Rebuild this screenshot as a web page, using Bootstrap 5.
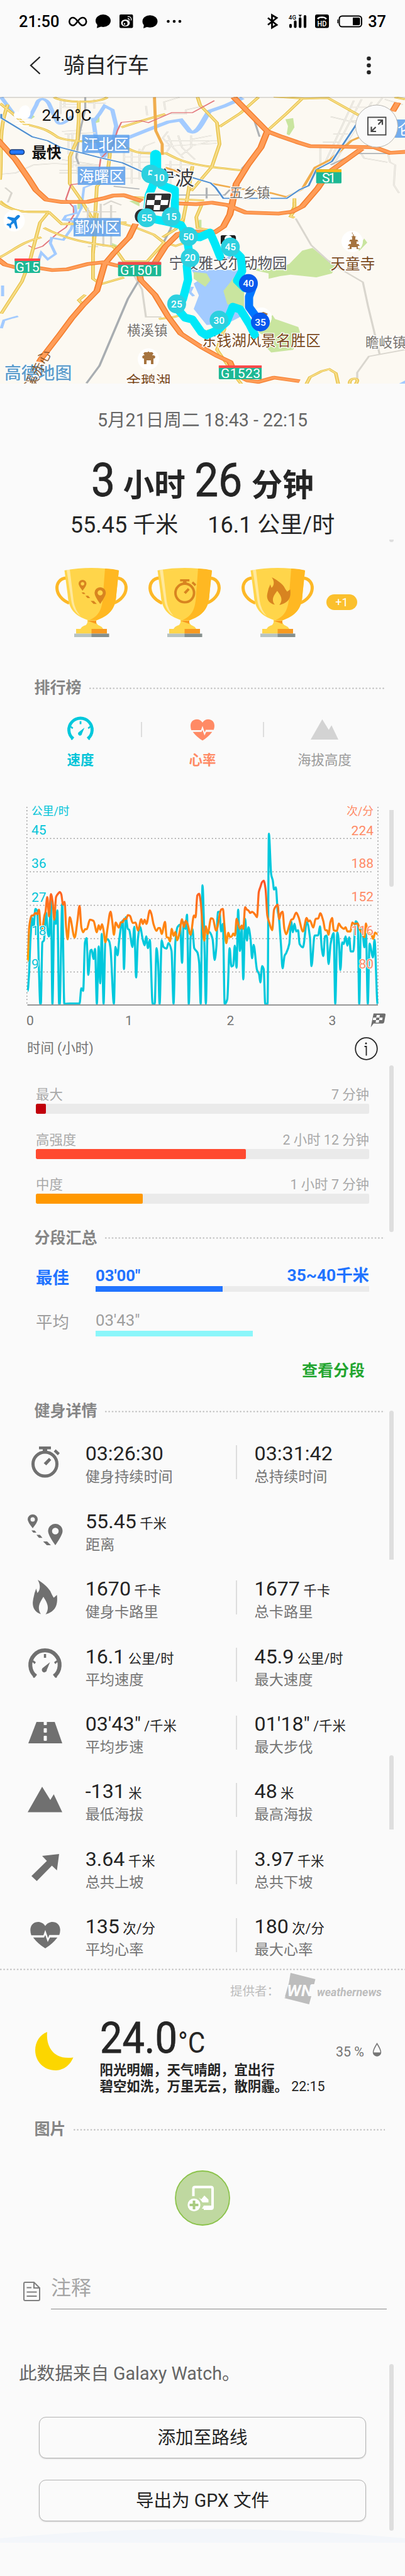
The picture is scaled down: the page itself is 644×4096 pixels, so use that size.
<!DOCTYPE html>
<html lang="zh-CN">
<head>
  <meta charset="UTF-8">
  <title>骑自行车</title>
  <meta name="viewport" content="width=device-width, initial-scale=1">
  <!-- Bootstrap CSS -->
  <link href="https://cdn.jsdelivr.net/npm/bootstrap@5.3.0/dist/css/bootstrap.min.css" rel="stylesheet">
  <style>
    body { background: #fafafa; color: #252525; font-family: Roboto, "Noto Sans CJK SC", sans-serif; }
    svg { display: block; flex: none; overflow: visible; }
    svg text { font-family: Roboto, "Noto Sans CJK SC", sans-serif; }
    .screen { width: 644px; height: 4096px; overflow: hidden; }

    .status-bar { height: 68px; padding: 0 30px; font-size: 25.4px; font-weight: 500; line-height: 68px; color: #000; }
    .app-bar { height: 86px; padding: 0 54px 14px 47px; }
    .app-title { font-size: 34px; line-height: 40px; margin: 0 0 0 36px; font-weight: 400; }
    .map-box { height: 456px; overflow: hidden; background: #fcf9f2; }

    .date-line { margin-top: 38px; font-size: 28.6px; line-height: 40px; color: #666; }
    .duration { margin-top: 30px; font-size: 75px; line-height: 90px; }
    .duration span { display: inline-block; line-height: 1; }
    .duration .num { transform: scaleX(.9); margin: 0 -2px; -webkit-text-stroke: .8px #252525; }
    .duration .unit { font-size: 49.5px; font-weight: 700; }
    .distance { margin-top: 5px; gap: 47px; font-size: 36px; line-height: 44px; }
    .trophies { margin-top: 46px; padding-left: 89px; height: 110px; gap: 34px; }
    .more-pill { margin: 0 0 2px -14px; width: 49px; height: 25px; border-radius: 13px; background: #fbc02d; color: #fff; font-size: 18px; line-height: 26px; }

    .section-head { height: 30px; padding: 0 32px 0 54.5px; gap: 12px; font-size: 25px; line-height: 30px; font-weight: 700; color: #868686; }
    .dots { height: 3px; background: radial-gradient(circle at 1.3px 1.5px, #bbb 0 .8px, transparent 1.5px) 0 0 / 5.37px 3px repeat-x; }
    .tabs-row { margin-top: 34px; padding: 0 31px; font-size: 21.4px; line-height: 24px; }
    .tab-item { width: 194px; gap: 19px; }
    .tab-line { height: 24px; width: 1.5px; margin: 5px -.75px 0; background: #ddd; }

    .time-row { margin-top: 7px; height: 40px; padding: 0 43px; font-size: 21.4px; color: #757575; }
    .zone { width: 530px; margin: 0 57px 27.6px; font-size: 21.4px; line-height: 28px; color: #a9a9a9; }
    .zone .progress { height: 16px; border-radius: 2px; background: #eaeaea; }
    .zone .progress-bar { border-radius: 2px; }
    .z-max { background: #c1000b; }
    .z-high { background: #ff4a30; }
    .z-mid { background: #ff9800; }

    .split { margin: 0 57px; line-height: 33px; font-size: 26.4px; }
    .split-name { width: 95px; padding-top: 4px; }
    .split-time { font-size: 25.7px; }
    .split .progress { height: 9px; border-radius: 0; background: #ebebeb; }
    .best { color: #2173ff; font-weight: 700; }
    .average { color: #9e9e9e; }
    .more-link { display: block; margin: 40px 64px 0 0; font-size: 25px; line-height: 30px; font-weight: 700; color: #22a52f; text-decoration: none; }

    .detail-row { height: 107.35px; }
    .detail-icon { width: 136px; padding-left: 8px; }
    .detail-cell { width: 240px; height: 107.35px; padding-top: 21px; }
    .detail-cell p { margin: 0; font-size: 32.2px; line-height: 38px; white-space: nowrap; }
    .detail-cell p span { font-size: 21.4px; line-height: 1; margin-left: -2.7px; }
    .detail-cell div { margin-top: 3px; font-size: 23.2px; line-height: 30px; color: #757575; }
    .detail-line { width: 1.5px; height: 54px; margin-right: 28px; background: #ddd; }

    .provider { height: 50px; margin-top: 4px; padding-right: 36px; gap: 8px; font-size: 19.5px; color: #bdbdbd; }
    .weather { margin-top: 19px; height: 124px; }
    .temperature { font-size: 68.5px; line-height: 70px; }
    .temperature span { display: inline-block; line-height: 1; transform: scaleX(.92); transform-origin: left; -webkit-text-stroke: .8px #252525; }
    .temperature .deg { font-size: 46px; margin-left: -9px; -webkit-text-stroke: 0; }
    .forecast { margin-top: 3px; font-size: 21.4px; line-height: 25.4px; white-space: nowrap; }

    .add-photo { margin: 50px auto 0; width: 88px; height: 88px; }
    .note-row { margin: 76px 29px 0 37px; gap: 17px; }
    .note-field { height: 57px; border-bottom: 1.6px solid #8a8a8a; font-size: 32px; line-height: 46px; color: #a5a5a5; }
    .source { margin: 82px 0 0 30px; font-size: 28.6px; line-height: 40px; color: #666; }
    .wide-btn { width: 520px; height: 65.5px; padding: 0; border: 1px solid #b4b4b4; border-radius: 11px; background: #fafafa; color: #252525; font-size: 28.6px; box-shadow: 0 1px 2px rgba(0, 0, 0, .15); }

    /* Scrollbar thumbs float over the page */
    .thumb { position: absolute; left: 619px; width: 7px; background: #dedede; }
  </style>
</head>
<body>
<div class="screen position-relative">

  <div class="status-bar d-flex align-items-center">
    <span>21:50</span>
    <svg class="ms-3" width="160" height="24" viewBox="107 22 160 24">
      <path d="M121 35c-3-5-5-7-8-7a5.500 6 0 0 0 0 12.500c6 0 8-12.500 15.500-12.500a5.500 6 0 0 1 0 12.500c-3 0-5-3-7-6" fill="none" stroke="#000" stroke-width="2.600"/>
      <ellipse cx="161" cy="33" rx="12" ry="10"/><path d="M152 38l-1 6.700 8-3z"/>
      <rect x="187" y="23" width="21.500" height="21.500" rx="2"/>
      <ellipse cx="196.500" cy="36.500" rx="7" ry="5.500" fill="#fff"/><circle cx="196" cy="37" r="3.800"/><circle cx="195" cy="38" r="1.200" fill="#fff"/>
      <path d="M200 26.500c4-1 6.500 2 5.500 6M200 29.500c2 0 3 1 2.500 3" fill="none" stroke="#fff" stroke-width="1.300"/>
      <ellipse cx="235.500" cy="34" rx="12" ry="9.800"/><path d="M226 39l-1 6 8-3z"/>
      <circle cx="264.500" cy="34" r="2.300"/><circle cx="274" cy="34" r="2.300"/><circle cx="283" cy="34" r="2.300"/>
    </svg>
    <svg class="ms-auto" width="152" height="24" viewBox="427 22 152 24">
      <path d="M428 28.500l14 11-7.500 4.500V24l7.500 4.500-14 11" fill="none" stroke="#000" stroke-width="2.800"/>
      <text x="461" y="31.200" font-size="9.500" font-weight="500" textLength="12">4G</text>
      <path d="M464 40v2.500M471.500 34.500v8M479.200 29.500v13M487 26v16.500" stroke="#000" stroke-width="4.200" stroke-linecap="round"/>
      <path d="M476.500 23.500h5.500l-2.700 3.500z"/>
      <rect x="503" y="23" width="22" height="21.500" rx="3"/>
      <path d="M506 29.500c3-4.500 13-4.500 16 0l-2.500 1.500-2-2.300h-7l-2 2.300z" fill="#fff"/>
      <text x="506.500" y="42" font-size="12" font-weight="500" fill="#fff" textLength="15" lengthAdjust="spacingAndGlyphs">HD</text>
      <rect x="541.500" y="25.500" width="35.500" height="17" rx="4.500" fill="none" stroke="#000" stroke-width="2"/>
      <path d="M540 31h-1.500v6h1.500z"/><path d="M563 28h9.500q2 0 2 2v8q0 2-2 2H563z"/>
    </svg>
    <span class="ms-2">37</span>
  </div>

  <header class="app-bar d-flex align-items-center">
    <svg width="18" height="28" viewBox="0 0 18 28"><path d="M16.500 .5L2 14l14.500 13.500" fill="none" stroke="#252525" stroke-width="2.300"/></svg>
    <h1 class="app-title">骑自行车</h1>
    <svg class="ms-auto" width="7" height="30" viewBox="0 0 7 30" fill="#252525"><circle cx="3.500" cy="4" r="3.300"/><circle cx="3.500" cy="15" r="3.300"/><circle cx="3.500" cy="26" r="3.300"/></svg>
  </header>

  <!-- Route map -->
  <div class="map-box">
    <svg width="644" height="456" viewBox="0 0 644 456">
      <defs>
        <clipPath id="mapClip"><rect width="644" height="456"/></clipPath>
        <g id="minor" fill="none">
          <path d="M235 740v110M250 740v60M235 800h75M235 780h70M340 770h70M365 740v70M240 980l80-10M250 1000l120-10M240 1190l135 40M0 1300l60-10 70-60 80-10 100 10h80M290 1240h90M230 1270h70M230 1290h70M280 990v260M265 1000v150M300 1100v200M565 790l5 70M640 820l-5-60 60-35M660 850h60v-30l70-30"/>
          <path d="M640 1050h200M640 1090l200-20M650 1010l20 90 40 80M690 1010l15 90 50 90M740 1010v90l-40 60M650 980l-20 50 30 60-20 60M600 1060l-40 30-20 70M490 1130h110M480 1170h120M470 1210h110M460 1260h120M420 1330h120M480 1100v260M510 1120v250M540 1110v230M640 1230h110M640 1260h100M660 1200v220M700 1190v140M740 1040l80-30M740 1090l80-40"/>
          <path d="M1370 750l-120 500M1400 740l-130 480M1440 760l-150 470M1360 800h80M1340 900h90M1290 1000h70M1250 1060h60M1280 870l130 60M1480 730l-40 100M1490 740l70 40M1500 1130l10 80 20 20-5 150 20 60M1390 1120l20 60 90 30M1240 1100v200"/>
        </g>
        <g id="yellowNorth" fill="none">
          <path d="M210 725c30 40 170 50 205 0M305 750v140l-5 150-30 130v200l40 110 50 160M0 770c30 50 60 90 95 155 90 40 90 50 130 100 80 60 250 0 260 70 40 50 60 50 160 50 60 60 90 90 290 125M30 780c-40 200-20 400-30 560M425 1050v110l-10 150-40 80-15 500M765 725l10 60 65 130 10 160-30 170-80 180M850 945l80-100 70-120M1170 735l-60 110-75 130M1060 720l120 15 90-5 120 130M470 950l80-50 90-50M0 1500c20 40 60 80 110 80h80M500 1470l290 25M1140 1480v60l-15 60M1568 740l-40-15M745 1240l-20 240-25 250"/>
        </g>
        <g id="yellowSouth" fill="none">
          <path d="M0 110c20 40 70 70 110 70l80 3 50 90h60M185 190l-30 70-40 290-30 150-80 240M170 300c80 80 150 110 270 140l40 110h90l65-140-40-60-80-60-60-30M240 270l250-10M0 520c60-60 80-110 160-150M375 190l-15 300v190l30 40 90-50M630 370l50-60 30-80M640 410l40 25 30-20v-70M780 130l-20 90 5 80 60 20M1140 110v60l-15 45 15 10M330 800l-25 40 20 40M615 980l60-15 35-20M870 1050l-30 160 80 220 20 50M1185 1470l15-55 45-45 30-15 25 30 10 85M1355 1470c-10-60 50-60 20 0"/>
        </g>
        <g id="orangeNorth" fill="none">
          <path d="M-10 1040L60 1190 110 1330 140 1420 180 1490 240 1507 340 1505 400 1480 440 1458 480 1456 550 1500M690 1517L760 1523 820 1512 880 1530 950 1585 1080 1593 1130 1580 1170 1540 1230 1405 1270 1290 1400 1110M905 725L1035 980 1090 1020 1150 1060 1200 1090 1450 1098 1510 1140 1575 1132M1035 980L1010 1100 960 1230 915 1370 898 1530 890 1600 865 1690 830 1735 740 1725 690 1745 640 1840 600 1960M1540 765L1520 830"/>
        </g>
        <g id="orangeSouth" fill="none">
          <path d="M525 270L500 370 440 490 405 570 375 770 320 880 280 970 230 1100 190 1200 160 1275 152 1300M-10 530L20 575 60 595 150 600 200 615 260 610 340 570 400 557 450 580 535 610 545 690 600 800 650 960 700 1090 780 1190 840 1255 890 1300 910 1390 960 1440 1000 1450 1060 1418 1160 1445"/>
        </g>
      </defs>
      <g clip-path="url(#mapClip)">
        <!-- parks and water, northern half -->
        <g transform="translate(0 -153.800) scale(.4107 .213)">
          <path d="M1105 890l30-10 5 70-20 60-10-10 5-60zM115 840l20 30-15 20zM360 880l25-10v40l-20 10zM500 1500l40-10v50zM300 1490h20v70h-20z" fill="#c9e59f"/>
          <g fill="none" stroke="#a3cbff">
            <path stroke-width="17" d="M5 725l50 130 60 20 25-90c10-70 40-50 50-10l30 130c10 40 40 0 60-40M365 900l20-50 20-60 30 30 15 120-10 100-40 140-30-170-10-130z"/>
            <path stroke-width="22" d="M480 1040l90-70 80-60 50-15 35 85c30 30 50-80 75-150l60-40 70-60"/>
            <path stroke-width="10" d="M365 1370l-40 30-10 150-20 80-45 5M420 1180v-60"/>
          </g>
          <use href="#minor" stroke="#d9d6ce" stroke-width="7"/>
          <use href="#minor" stroke="#f8f5ee" stroke-width="3"/>
          <path d="M330 725v90l-20 160-15 200 10 50M985 900l20 120M935 1260l30-60M1370 1145h170M1370 1150l-90 80M440 1390l100 20M690 1455h180l20-40M800 1400v80" fill="none" stroke="#aeb2b5" stroke-width="8"/>
          <g stroke="#e3be3e" stroke-width="14"><use href="#yellowNorth"/></g>
          <g stroke="#f8dc86" stroke-width="8"><use href="#yellowNorth"/></g>
          <path d="M598 725l5 250 25 100v80M820 1370l80 30 150 40 60 30 60-60 50-160 60-60 80-140 60-50M640 1250l80 50" fill="none" stroke="#f0ad4d" stroke-width="12"/>
          <path d="M830 750l-85 90h-80l-90 75-30-15-75 12-15 60-20 120-45 90-10 130-40 30-40 30-25 5-20 110 30 60v60l-30 90-30 40-60 100-30 20-25-25" fill="none" stroke="#e2747a" stroke-width="6"/>
          <path d="M5 850v30l120 140 60 30 50 50 150 75 90 40 80 70 190 40 70 40 20 35 30 80h245l50-65 35-30 30-120 60-60 30-90 90-260" fill="none" stroke="#fff" stroke-width="13"/>
          <path d="M5 850v30l120 140 60 30 50 50 150 75 90 40 80 70 190 40 70 40 20 35 30 80h245l50-65 35-30 30-120 60-60 30-90 90-260" fill="none" stroke="#5290cf" stroke-width="8"/>
        </g>
        <!-- parks and water, southern half -->
        <g transform="translate(0 144.400) scale(.4107 .213)">
          <path d="M740 610l180 5 20 90v250l-60 60-80 10-50-120 20-100-20-90 25-30-20-30z" fill="#a3cbff"/>
          <path d="M870 530l35-40 20 50zM1568 1440l-25 25h25z" fill="#a3cbff"/>
          <path d="M750 630l50 10 15 50-20 50-45-60zM905 670l15 50 25-10v180l-65-20-15-100 25-60zM950 600l110 10 60-40 50-100 40-20 50 80 45 40-20 70-60 30-100-20-40 10-45 20v-40zM1055 950l10 30 90 60 10 60-30 110-85 20-30-60 10-60-30-30zM430 410l25 20-10 30-20-20zM1410 380l12 30-30 60-10-5zM800 1060l30-10v60h-20zM710 970l15-30v40zM770 240h10v60h-20z" fill="#c9e59f"/>
          <path d="M290 130l5 60-40 20-10 30 40 10-10 60-30 80-45-15-5 40 20 80-30 40-25-50-20 110-70-20-5 60M10 730v80M5 1050l10-60 35-20 20-10M745 740l-10 40 15 30" fill="none" stroke="#a3cbff" stroke-width="12"/>
          <g fill="none" stroke="#d9d6ce" stroke-width="8">
            <path d="M320 180h130M330 230h130M340 150v170M390 120v220M430 130v300M400 130l30-30 40 30M360 380v110M400 330v110M340 440h40M520 660l30 100 15 205h60M1145 230l60 200 80 140 120 135 20 180 45 360M1568 1210l-140 50-45 120v85M20 0l25 40-15 70"/>
          </g>
          <path d="M535 700l-40 130-110 500-50 130M600 560l30-140 30-110 25-150" fill="none" stroke="#a8adb1" stroke-width="9"/>
          <g stroke="#e3be3e" stroke-width="14"><use href="#yellowSouth"/></g>
          <g stroke="#f8dc86" stroke-width="8"><use href="#yellowSouth"/></g>
          <g stroke="#f47d2c" stroke-width="26" stroke-linejoin="round"><use href="#orangeSouth"/></g>
          <g stroke="#ff9d58" stroke-width="17" stroke-linejoin="round"><use href="#orangeSouth"/></g>
        </g>
        <g transform="translate(0 -153.800) scale(.4107 .213)" stroke-linejoin="round">
          <g stroke="#f47d2c" stroke-width="27"><use href="#orangeNorth"/></g>
          <g stroke="#ff9d58" stroke-width="18"><use href="#orangeNorth"/></g>
        </g>

        <!-- place names -->
        <g fill="#5c9fec" fill-opacity=".86"><rect x="130.600" y="60.300" width="75" height="29"/><rect x="123.600" y="111" width="75.600" height="29"/><rect x="117" y="192.800" width="75" height="29"/><rect x="628" y="36" width="16" height="29"/></g>
        <g fill="#fff" font-size="24"><text x="132.500" y="83.500">江北区</text><text x="125.500" y="134.500">海曙区</text><text x="118.500" y="216">鄞州区</text><text x="632" y="60">仑</text></g>
        <g paint-order="stroke" stroke="#fff" stroke-width="2.500" font-size="21.500" fill="#77736d">
          <text x="365" y="159.500">五乡镇</text><text x="202" y="379">横溪镇</text><text x="581" y="398">瞻岐镇</text>
          <text x="247" y="140" font-size="31" fill="#3c3c40">宁波</text>
          <text x="268.500" y="272.500" font-size="23.500" fill="#55555a">宁波雅戈尔动物园</text>
        </g>
        <circle cx="416" cy="351" r="16" fill="#fff"/><path d="M412 344l7-2 7 3-3 3v5h-8z" fill="#a67440"/>
        <g paint-order="stroke" stroke="#fff" stroke-width="2.500" font-size="23.600" fill="#7b4a1c">
          <text x="525.500" y="273.500">天童寺</text><text x="321" y="395.500">东钱湖风景名胜区</text><text x="200.500" y="460.500">金鹅湖</text>
        </g>
        <text x="7" y="448.500" font-size="26.800" font-weight="500" fill="#5b9ccb" stroke="#fff" stroke-width="2" paint-order="stroke">高德地图</text>
        <text transform="translate(53 466) rotate(-64)" font-size="22" fill="#7b4a1c" fill-opacity=".85">溪赤心</text>
        <!-- road shields -->
        <g fill="#1db894"><rect x="502.700" y="115.200" width="40.300" height="22.400" rx="1.500"/><rect x="23.400" y="257" width="40.300" height="23" rx="1.500"/><rect x="187.700" y="262.400" width="68.600" height="22.800" rx="1.500"/><rect x="347.900" y="427" width="68.200" height="22" rx="1.500"/></g>
        <path d="M502.700 115.200h40.300v4.500h-40.300z" fill="#fdb813"/>
        <path d="M23.400 257h40.300v4h-40.300zM187.700 262.400h68.600v4.500h-68.600zM347.900 427h68.200v4h-68.200z" fill="#ff4a4a"/>
        <g fill="#fff" font-size="21"><text x="512" y="135.500" textLength="22">S1</text><text x="24.500" y="277.500" textLength="38">G15</text><text x="191" y="282.500" textLength="63">G1501</text><text x="351" y="446.500" textLength="63">G1523</text></g>
        <!-- points of interest -->
        <circle cx="22.500" cy="197" r="17" fill="#fff"/>
        <path d="M31 188.500q2 1.500-1 4l-4 4 2 12-2 2-4-10-4 3v4l-2 2-2-4-4-2 2-2h4l3-4-8-5 2-2 10 2 4-4q3-1.500 4 0z" fill="#1583e0"/>
        <circle cx="560" cy="230" r="17" fill="#fff"/>
        <path d="M559 216h2v4l6 3h-2v4h3l2 3h-3v4h3l2 3h-3v4h3v1h-5v-3h-8v3h-6v-1h3v-4h-3l2-3h3v-4h-3l2-3h3v-4h-2l5-3z" fill="#a67440"/>
        <circle cx="236" cy="417" r="17" fill="#fff"/>
        <path d="M228 408l2-2h5v-1h2v1h5l2 2-2 3h3l2 2-1 3h-2v9h-4v-6h-7v6h-4v-9h-2l-1-3 2-2h2z" fill="#a67440"/>
        <circle cx="363.500" cy="229" r="16.500" fill="#fff"/><path d="M351 221q1-1 3-1h19q3 1 2 8v6h-24z" fill="#1f1f1f"/><circle cx="363" cy="226" r="6" fill="#fff"/>

        <!-- recorded route -->
        <g fill="none" stroke-linecap="round" stroke-linejoin="round">
          <path d="M247.500 94v36l-11 27-2 22M252 128l4 12 22 8v44M234 192l38 8 16 4 8 14 6 36-5 15 2 22-8 30-9 16 12 14 12 3 14 20 8 5 18-8 14-13 10-24 12 4 15 24 8 16M300 222l18 1 16-7 8 18 8 20M366 238l17 17 2 22-8 15 12 12" stroke="#00e8f8" stroke-width="13"/>
          <path d="M247.500 93v36" stroke="#00e8f8" stroke-width="17.500"/>
          <path d="M402 302l-6 16v16l16 22" stroke="#0077ff" stroke-width="13"/>
        </g>
        <circle cx="226" cy="190" r="12.500" fill="#2f2f2f" stroke="#fff" stroke-width="1.500"/>
        <g transform="translate(231 153)">
          <path d="M5 0h33q4 0 3.500 4l-4 22q-.5 4-4 4H2q-4 0-3.500-4l3-22q.5-4 3.500-4z" fill="#2f2f2f" stroke="#fff" stroke-width="1.500"/>
          <path d="M16 3.500h10l-1 7.500H15zM3 11h12l-1 8H2zM25 11h12l-1.500 8H24zM14 19h10l-1 8H13z" fill="#fff"/>
        </g>
        <g fill="#2dd0df"><circle cx="239.800" cy="122.700" r="15"/><circle cx="253" cy="128" r="15"/><circle cx="233.300" cy="192.300" r="15"/><circle cx="272.300" cy="190.600" r="15"/><circle cx="299.800" cy="222.100" r="15"/><circle cx="302.300" cy="256" r="15"/><circle cx="280.900" cy="329.300" r="15"/><circle cx="348.300" cy="355.100" r="15"/><circle cx="366.300" cy="238.800" r="15"/></g>
        <g fill="#0759ee"><circle cx="414" cy="358" r="15"/><circle cx="395" cy="296.700" r="15"/></g>
        <g fill="#fff" font-size="15.500" font-weight="500" text-anchor="middle">
          <text x="253" y="133.500">10</text><text x="233.300" y="197.500">55</text><text x="272.300" y="195.500">15</text><text x="299.800" y="227.500">50</text><text x="302.300" y="261">20</text><text x="280.900" y="334.500">25</text><text x="348.300" y="360.500">30</text><text x="366.300" y="244">45</text><text x="414" y="363.500">35</text><text x="395" y="302">40</text>
        </g>
        <path d="M242.500 117.500h-5l-.8 6q3.500-1.500 4.300 1" fill="none" stroke="#fff" stroke-width="2"/>

        <!-- weather and legend -->
        <path d="M24 34c-6-8 3-14 6-9 1-13 16-16 18-3 2 9-4 14-12 13z" fill="#fff"/>
        <path d="M24 37.500h22M24 42h22M28 46h18" stroke="#fff" stroke-width="1.500"/>
        <text x="66.500" y="37.500" font-size="26.300" textLength="79" fill="#111">24.0°C</text>
        <rect x="15.500" y="84" width="23" height="7.500" rx="3.500" fill="#2377fb" stroke="#1a3c78" stroke-width="1.500"/>
        <text x="50.500" y="96.500" font-size="23.500" font-weight="700" fill="#111">最快</text>
        <circle cx="599" cy="46.500" r="33.500" fill="#fafafa" stroke="#b5b3af"/>
        <g fill="none" stroke="#444"><rect x="585" y="32.500" width="28.500" height="28" stroke-width="1.800"/><path d="M591 54.500l6.500-6.500M601.500 44l6-6.500M600.500 37h7.500v7.500M590.500 47.500V55h7.500" stroke-width="2.200"/></g>
        <path d="M0 .8h644" stroke="#000" stroke-opacity=".14" stroke-width="1.800"/>
      </g>
    </svg>
  </div>

  <!-- Summary -->
  <div class="date-line text-center">5月21日周二 18:43 - 22:15</div>
  <div class="duration text-center"><span class="num">3</span><span class="unit">&nbsp;小时&nbsp;</span><span class="num">26</span><span class="unit">&nbsp;分钟</span></div>
  <div class="distance d-flex justify-content-center"><span>55.45 千米</span><span>16.1 公里/时</span></div>

  <div class="trophies d-flex align-items-center">
    <svg width="114" height="110" viewBox="0 0 114 110">
      <defs>
        <g id="trophy">
          <path d="M16 16C-4 18-4 46 21 56M97 16c20 2 20 30-5 40" fill="none" stroke="#fdb827" stroke-width="5"/>
          <path d="M13.500 4Q56 -4 100 4L96 42C95 66 84 76 64 83.500H52C30 76 20 66 18.500 42z" fill="#ffd54a"/>
          <path d="M78 1Q92 1.500 100 4L96 42C95 66 84 76 64 83.500H52C70 76 74 64 75 40z" fill="#ffb822"/>
          <path d="M17 3.500l5-1 6 50q2 14 11 24Q26 68 24 50z" fill="#fff" fill-opacity=".45"/>
          <path d="M50 83l14 .5q-1 5 5 9H46q5-4 4-9.500z" fill="#ffd54a"/><path d="M50 84h14v5z" fill="#f79a20"/>
          <path d="M39 97q3-7 18-7t18 7z" fill="#ffd54a"/>
          <path d="M32 97h25v7.500H32z" fill="#ffd54a"/><path d="M56.500 97H81v7.500H56.500z" fill="#f79a20"/>
          <path d="M29 104.500h28v5.500H29z" fill="#b7c3c2"/><path d="M56.500 104.500H84.500v5.500h-28z" fill="#85908e"/>
        </g>
        <g id="pins">
          <path fill-rule="evenodd" d="M8 0a8 8 0 0 1 8 8q0 4-8 14Q0 12 0 8A8 8 0 0 1 8 0zm0 4.500a3.500 3.500 0 1 0 0 7 3.500 3.500 0 0 0 0-7zM44 15a11.500 11.500 0 0 1 11.500 11.500q0 6-11.500 22.500Q32.500 33 32.500 26.500A11.500 11.500 0 0 1 44 15zm0 6.200a5.300 5.300 0 1 0 0 10.600 5.300 5.300 0 0 0 0-10.600z"/>
          <path d="M6 25.500h5l3 3.500H9zM14 32.500h5.500l4 4.700h-5.500zM24.500 43H31l6 6h-6.500z"/>
        </g>
        <g id="stopwatch">
          <circle cx="21.500" cy="28" r="19" fill="none" stroke="currentColor" stroke-width="5"/>
          <path d="M12 0h19v4.500h-6V9h-7V4.500h-6zM38.500 4.500l6.500 6-3 3.500-6.500-6zM28 18l3.500 3.500-8 8.500-4-3.500z"/>
        </g>
        <g id="flame"><path d="M8 0C18 6 24 12 28 18Q31 25 33.500 28.500L38.500 24C40 38 38 50 20.500 55 28 44 22 35 17 27 12 35 6 44 13 54.500 2 51-1 42 .5 33Q2 22 5.500 14l2 7C13 15 12 7 8 0z"/></g>
        <g id="gauge">
          <path d="M11.800 39.500A23.300 23.300 0 1 1 41.200 39.500" fill="none" stroke="currentColor" stroke-width="6.200"/>
          <path d="M24.800 4h3.500v6h-3.500zM6 16l2-2 4 3-2 3zM47 16l-2-2-4 3 2 3zM7 40l5-5 1.500 2-5 5zM46 40l-5-5-1.500 2 5 5zM34.500 17L29.500 29a4 4 0 1 1-7-2.500z"/>
        </g>
        <g id="peaks"><path d="M0 40.500L23 0l13 21L41.500 12 55 40.500z"/></g>
        <g id="heart">
          <path d="M24 7.500C30-3 48-1 48 14q0 4-1.500 8H30.500L28.500 27 24 14 21 22.500H1.500Q0 18 0 14C0-1 18-3 24 7.500zM4.500 26H22l2-4 4 11.500L31.500 26H43.500Q36 36 24 43.500 12 36 4.500 26z"/>
        </g>
      </defs>
      <use href="#trophy"/><use href="#pins" fill="#d88420" transform="translate(36 19) scale(.78)"/>
    </svg>
    <svg width="114" height="110" viewBox="0 0 114 110"><use href="#trophy"/><use href="#stopwatch" fill="#d88420" color="#d88420" transform="translate(40 18) scale(.78)"/></svg>
    <svg width="114" height="110" viewBox="0 0 114 110"><use href="#trophy"/><use href="#flame" fill="#d88420" transform="translate(39.500 15) scale(.96 .8)"/></svg>
    <span class="more-pill text-center">+1</span>
  </div>

  <div class="section-head d-flex align-items-center" style="margin-top: 66px"><span>排行榜</span><i class="dots flex-fill"></i></div>
  <div class="tabs-row d-flex align-items-start">
    <div class="tab-item d-flex flex-column align-items-center fw-bold" style="color: #00c4d8">
      <svg width="42" height="35" viewBox="0 0 53 43"><use href="#gauge" fill="#00c8dc" color="#00c8dc"/></svg>速度
    </div>
    <i class="tab-line"></i>
    <div class="tab-item d-flex flex-column align-items-center fw-bold" style="color: #ff8a65">
      <svg width="38" height="35" viewBox="0 0 48 44"><use href="#heart" fill="#ff8a65"/></svg>心率
    </div>
    <i class="tab-line"></i>
    <div class="tab-item d-flex flex-column align-items-center" style="color: #9b9b9b">
      <svg width="44" height="35" viewBox="0 0 55 42"><use href="#peaks" fill="#d3d3d3"/></svg>海拔高度
    </div>
  </div>

  <!-- Speed and heart rate chart -->
  <svg width="644" height="376" viewBox="0 0 644 376" style="margin-top: 43px">
    <defs>
      <linearGradient id="heat" gradientUnits="userSpaceOnUse" x1="0" y1="130" x2="0" y2="262"><stop stop-color="#ff4b2b"/><stop offset=".25" stop-color="#ff6a20"/><stop offset=".6" stop-color="#ff8412"/><stop offset="1" stop-color="#ffa300"/></linearGradient>
    </defs>
    <g stroke="#909090" stroke-width="1.500" stroke-dasharray="1.600 3.760" fill="none">
      <path d="M47.500 69.200h546M47.500 122.200h546M47.500 175.500h546M47.500 228.500h546M47.500 281.500h546"/>
      <path d="M42.800 19v314M601 19v314"/>
    </g>
    <g font-size="21" fill="#00c4d8"><text x="50" y="31.500" font-size="17.700">公里/时</text><text x="50" y="63">45</text><text x="50" y="116">36</text><text x="50" y="169.500">27</text></g>
    <g font-size="21" fill="#ff8a65" text-anchor="end"><text x="594" y="31.500" font-size="17.700">次/分</text><text x="594" y="63.500">224</text><text x="594" y="116">188</text><text x="594" y="169">152</text></g>
    <g fill="none" stroke-linejoin="round" stroke-width="3.300"><path id="speedLine" stroke="#00c8dc"/><path id="heartLine" stroke="url(#heat)"/></g>
    <g font-size="21" stroke="#fafafa" stroke-width="2" paint-order="stroke">
      <g fill="#00c4d8"><text x="50" y="222.500">18</text><text x="50" y="275.500">9</text></g>
      <g fill="#ff8a65" text-anchor="end"><text x="594" y="222.500">116</text><text x="594" y="275.500">80</text></g>
    </g>
    <path d="M43.500 334H601" stroke="#969696" stroke-width="1.800"/>
    <g font-size="21" fill="#757575"><text x="42" y="365.500">0</text><text x="199" y="365.500">1</text><text x="360.500" y="365.500">2</text><text x="522.500" y="365.500">3</text></g>
    <path d="M594 347.500h17q2.500 0 2 2.500l-2 11q-.5 2.500-3 2.500h-14l-4.500 6z" fill="#6e6e6e"/>
    <path d="M599 350h5l-.7 4h-5zM593.500 354h5l-.7 4h-5zM603.500 354h5l-.7 4h-5zM598 358h5l-.7 4h-5z" fill="#fff"/>
  </svg>
  <div class="time-row d-flex align-items-center justify-content-between">
    <span>时间 (小时)</span>
    <svg width="37" height="37" viewBox="0 0 37 37"><circle cx="18.500" cy="18.500" r="17.300" fill="none" stroke="#252525" stroke-width="1.800"/><circle cx="18" cy="10" r="1.500" fill="#252525"/><path d="M15.500 15h3v14.500" fill="none" stroke="#252525" stroke-width="1.800"/></svg>
  </div>

  <!-- Heart rate zones -->
  <div class="zone" style="margin-top: 40px">
    <div class="d-flex justify-content-between"><span>最大</span><span>7 分钟</span></div>
    <div class="progress"><div class="progress-bar z-max" style="width: 2.95%"></div></div>
  </div>
  <div class="zone">
    <div class="d-flex justify-content-between"><span>高强度</span><span>2 小时 12 分钟</span></div>
    <div class="progress"><div class="progress-bar z-high" style="width: 62.95%"></div></div>
  </div>
  <div class="zone">
    <div class="d-flex justify-content-between"><span>中度</span><span>1 小时 7 分钟</span></div>
    <div class="progress"><div class="progress-bar z-mid" style="width: 32%"></div></div>
  </div>

  <div class="section-head d-flex align-items-center" style="margin-top: 39.800px"><span>分段汇总</span><i class="dots flex-fill"></i></div>
  <div class="split best d-flex" style="margin-top: 28px">
    <div class="split-name">最佳</div>
    <div class="flex-fill">
      <div class="d-flex justify-content-between"><span class="split-time">03'00"</span><span>35~40千米</span></div>
      <div class="progress"><div class="progress-bar" style="width: 46.4%; background: #2173ff"></div></div>
    </div>
  </div>
  <div class="split average d-flex" style="margin-top: 29px">
    <div class="split-name">平均</div>
    <div class="flex-fill">
      <div class="split-time">03'43"</div>
      <div class="progress bg-transparent"><div class="progress-bar" style="width: 57.5%; background: #8bf6fa"></div></div>
    </div>
  </div>
  <a class="more-link text-end" href="#">查看分段</a>

  <!-- Workout details -->
  <div class="section-head d-flex align-items-center" style="margin-top: 34.500px"><span>健身详情</span><i class="dots flex-fill"></i></div>
  <div style="margin-top: 12px">
    <div class="detail-row d-flex align-items-center">
      <div class="detail-icon d-flex justify-content-center"><svg width="44" height="50" viewBox="0 0 44 50"><use href="#stopwatch" fill="#707070" color="#707070"/></svg></div>
      <div class="detail-cell"><p>03:26:30</p><div>健身持续时间</div></div>
      <i class="detail-line"></i>
      <div class="detail-cell"><p>03:31:42</p><div>总持续时间</div></div>
    </div>
    <div class="detail-row d-flex align-items-center">
      <div class="detail-icon d-flex justify-content-center"><svg width="56" height="50" viewBox="0 0 56 50"><use href="#pins" fill="#707070"/></svg></div>
      <div class="detail-cell"><p>55.45 <span>千米</span></p><div>距离</div></div>
    </div>
    <div class="detail-row d-flex align-items-center">
      <div class="detail-icon d-flex justify-content-center"><svg width="39" height="55" viewBox="0 0 39 55"><use href="#flame" fill="#707070"/></svg></div>
      <div class="detail-cell"><p>1670 <span>千卡</span></p><div>健身卡路里</div></div>
      <i class="detail-line"></i>
      <div class="detail-cell"><p>1677 <span>千卡</span></p><div>总卡路里</div></div>
    </div>
    <div class="detail-row d-flex align-items-center">
      <div class="detail-icon d-flex justify-content-center"><svg width="53" height="42" viewBox="0 0 53 42"><use href="#gauge" fill="#707070" color="#707070"/></svg></div>
      <div class="detail-cell"><p>16.1 <span>公里/时</span></p><div>平均速度</div></div>
      <i class="detail-line"></i>
      <div class="detail-cell"><p>45.9 <span>公里/时</span></p><div>最大速度</div></div>
    </div>
    <div class="detail-row d-flex align-items-center">
      <div class="detail-icon d-flex justify-content-center"><svg width="54" height="34" viewBox="0 0 54 34"><path d="M13 0h29l12 34H0z" fill="#707070"/><g fill="#fafafa"><rect x="24.500" y="-2" width="5" height="7" rx="1"/><rect x="24.500" y="10" width="5" height="7" rx="1"/><rect x="24.500" y="22" width="5" height="8" rx="1"/></g></svg></div>
      <div class="detail-cell"><p>03'43" <span>/千米</span></p><div>平均步速</div></div>
      <i class="detail-line"></i>
      <div class="detail-cell"><p>01'18" <span>/千米</span></p><div>最大步伐</div></div>
    </div>
    <div class="detail-row d-flex align-items-center">
      <div class="detail-icon d-flex justify-content-center"><svg width="55" height="41" viewBox="0 0 55 41"><use href="#peaks" fill="#707070"/></svg></div>
      <div class="detail-cell"><p>-131 <span>米</span></p><div>最低海拔</div></div>
      <i class="detail-line"></i>
      <div class="detail-cell"><p>48 <span>米</span></p><div>最高海拔</div></div>
    </div>
    <div class="detail-row d-flex align-items-center">
      <div class="detail-icon d-flex justify-content-center"><svg width="44" height="43" viewBox="0 0 44 43"><path d="M44 0l-3.500 26-8-7.500L8.500 43 0 35l24.500-24-7.500-8z" fill="#707070"/></svg></div>
      <div class="detail-cell"><p>3.64 <span>千米</span></p><div>总共上坡</div></div>
      <i class="detail-line"></i>
      <div class="detail-cell"><p>3.97 <span>千米</span></p><div>总共下坡</div></div>
    </div>
    <div class="detail-row d-flex align-items-center">
      <div class="detail-icon d-flex justify-content-center"><svg width="48" height="43" viewBox="0 0 48 43.500"><use href="#heart" fill="#707070"/></svg></div>
      <div class="detail-cell"><p>135 <span>次/分</span></p><div>平均心率</div></div>
      <i class="detail-line"></i>
      <div class="detail-cell"><p>180 <span>次/分</span></p><div>最大心率</div></div>
    </div>
  </div>
  <div class="dots"></div>

  <!-- Weather -->
  <div class="provider d-flex align-items-center justify-content-end">
    <span class="pt-2">提供者：</span>
    <svg width="156" height="50" viewBox="0 0 156 50">
      <path d="M10 0l39.500 10-2 8H7zM4 37h39l-3.500 13L0 40z" fill="#bdbdbd"/><path d="M7 17h36l-4 21H1z" fill="#bdbdbd"/>
      <text x="4" y="37" font-size="26" font-weight="700" font-style="italic" fill="#fafafa" textLength="41" lengthAdjust="spacingAndGlyphs">WN</text>
      <text x="52" y="37" font-size="19" font-weight="700" font-style="italic" fill="#bdbdbd" textLength="103" lengthAdjust="spacingAndGlyphs">weathernews</text>
    </svg>
  </div>
  <div class="weather d-flex">
    <svg width="61" height="61" viewBox="0 0 61 61" style="margin: 25px 42px 0 55.500px"><path d="M19 0C17 22 28 45 60.500 40.500 54 56 42 61 32 61 14 61 0 47 0 29 0 15 8 4 19 0z" fill="#fcd600"/></svg>
    <div>
      <div class="temperature"><span>24.0</span><span class="deg">°C</span></div>
      <div class="forecast"><b>阳光明媚，天气晴朗，宜出行</b><br><b>碧空如洗，万里无云，散阴霾。</b> 22:15</div>
    </div>
    <div class="ms-auto d-flex align-items-center" style="height: 100px; padding: 14px 37px 0 0; gap: 13px; font-size: 21.400px; color: #757575">
      <span class="text-nowrap" style="margin-left: -60px">35 %</span>
      <svg width="15" height="23" viewBox="0 0 15 23" style="margin-top: -8px"><path d="M7.500 1.500Q13.500 11 13.500 15a6 6 0 0 1-12 0Q1.500 11 7.500 1.500z" fill="none" stroke="#757575" stroke-width="1.500"/><path d="M1.500 15.500h12a6 6 0 0 1-12 0z" fill="#757575"/></svg>
    </div>
  </div>

  <div class="section-head d-flex align-items-center" style="margin-top: 41px"><span>图片</span><i class="dots flex-fill"></i></div>
  <div class="add-photo">
    <svg width="88" height="88" viewBox="0 0 88 88">
      <circle cx="44" cy="44" r="43" fill="#bfd8a0" stroke="#8bc34a" stroke-width="1.800"/>
      <path d="M29.500 41V29q0-2.500 2.500-2.500h25.500q2.500 0 2.500 2.500v29.500q0 2.500-2.500 2.500H46" fill="none" stroke="#fff" stroke-width="4"/>
      <path d="M38 43l4 3 5-6 6.500 6.500V51H44zM46 56h14v5H43z" fill="#fff"/>
      <circle cx="30.500" cy="55" r="10.200" fill="#fff"/><path d="M30.500 48v14M23.500 55h14" stroke="#a9cb80" stroke-width="4"/>
    </svg>
  </div>

  <div class="note-row d-flex align-items-start">
    <svg width="27" height="31" viewBox="0 0 27 31" style="margin-top: 13px"><path d="M1 3q0-2 2-2h14l9 9v18q0 2-2 2H3q-2 0-2-2zM17 1v9h9M5.500 9.500H13M5.500 16.500h16M5.500 23h16" fill="none" stroke="#808080" stroke-width="2"/></svg>
    <div class="note-field flex-fill">注释</div>
  </div>

  <div class="source">此数据来自 Galaxy Watch。</div>
  <div class="d-flex flex-column align-items-center" style="margin-top: 49px; gap: 34.500px">
    <button class="btn wide-btn">添加至路线</button>
    <button class="btn wide-btn">导出为 GPX 文件</button>
  </div>
  <svg width="644" height="22" viewBox="0 0 644 22" style="margin-top: 12px"><path d="M0 15Q322-15 644 15v7H0z" fill="#f3f6fa"/></svg>

  <i class="thumb" style="top: 858px; height: 4px; border-radius: 0 0 4px 4px"></i>
  <i class="thumb" style="top: 1288px; height: 122px; border-radius: 0 0 4px 4px"></i>
  <i class="thumb" style="top: 1694px; height: 265px; border-radius: 4px"></i>
  <i class="thumb" style="top: 2243px; height: 237px; border-radius: 4px 4px 0 0"></i>
  <i class="thumb" style="top: 2791px; height: 118px; border-radius: 4px 4px 0 0"></i>
  <i class="thumb" style="top: 3759px; height: 265px; border-radius: 4px"></i>
</div>

<!-- Bootstrap JS -->
<script src="https://cdn.jsdelivr.net/npm/bootstrap@5.3.0/dist/js/bootstrap.bundle.min.js"></script>
<script>
  // Samples as "x,y" pairs on a 1568 x 1568 grid
  const speed = '107,1170 112,1080 118,860 124,735 130,790 137,680 144,690 150,1000 156,1250 158,1250 164,880 170,870 178,700 186,830 190,845 197,620 203,1250 210,740 216,770 222,690 229,1250 231,1250 241,650 249,1248 270,1246 308,1246 315,1155 322,1170 329,880 335,855 342,1075 350,930 355,925 362,980 368,920 375,1250 382,905 388,1125 394,830 401,1250 408,870 416,862 423,875 428,920 441,1248 447,908 455,958 462,860 475,750 480,1040 487,730 495,800 500,805 513,908 520,787 527,1090 534,860 542,787 553,865 560,898 566,845 573,915 580,865 591,1248 599,1248 606,915 612,1000 618,1250 626,868 633,908 645,918 652,885 664,930 672,1248 679,880 687,790 697,775 705,1003 711,760 718,800 724,715 731,1250 738,850 745,800 752,915 764,940 771,1000 777,1248 784,540 791,860 797,1248 804,815 812,820 823,860 831,985 838,900 843,700 850,697 856,815 863,770 870,1250 880,1220 889,915 896,1025 903,1018 909,900 916,1032 922,685 929,932 936,800 942,1102 949,740 956,870 962,790 970,860 976,975 982,895 995,1045 1003,1070 1008,1120 1015,1022 1021,1040 1027,1248 1036,1248 1041,232 1050,475 1056,510 1061,565 1068,552 1075,690 1080,735 1088,900 1094,1035 1102,960 1108,945 1120,890 1127,755 1134,820 1140,770 1147,815 1154,808 1160,890 1173,910 1188,760 1200,850 1206,1022 1218,840 1232,838 1239,785 1246,920 1252,962 1258,845 1265,840 1272,1010 1280,890 1292,825 1298,1250 1306,820 1312,880 1318,1045 1325,880 1331,890 1338,845 1345,900 1352,850 1358,935 1368,935 1377,755 1385,770 1391,1250 1397,800 1404,830 1411,910 1417,830 1424,1250 1431,888 1444,970 1450,865 1462,1250';
  const heart = '107,990 113,790 122,722 130,718 137,705 145,712 151,685 158,800 163,800 172,720 176,700 183,610 190,725 197,592 204,640 210,745 217,610 225,590 231,580 237,592 244,655 250,638 256,790 262,862 270,730 289,852 300,750 308,663 315,790 322,820 330,802 336,802 348,745 362,752 375,820 382,778 388,805 395,772 401,810 408,880 416,800 428,697 435,760 441,835 448,762 460,792 468,760 475,760 481,740 488,742 495,718 503,722 514,765 525,762 534,810 547,742 553,770 560,745 567,770 580,690 586,710 595,775 606,812 613,795 619,795 626,830 639,758 645,850 652,852 658,875 665,800 672,842 679,818 686,868 694,830 705,742 712,790 719,752 726,770 738,835 751,720 757,732 764,600 771,590 777,640 784,780 791,870 797,785 804,830 817,737 824,740 837,810 856,685 863,680 869,780 876,885 884,823 890,848 897,845 903,828 910,840 916,740 929,800 936,780 942,800 949,670 956,685 962,690 969,705 976,698 988,715 995,730 1002,580 1008,550 1015,520 1021,512 1028,560 1035,720 1042,760 1054,808 1061,685 1068,665 1075,655 1081,742 1088,705 1094,697 1101,800 1108,832 1120,780 1128,745 1134,742 1147,703 1156,730 1173,815 1187,735 1194,755 1200,750 1213,792 1222,740 1232,738 1240,707 1252,755 1259,808 1266,808 1272,835 1279,760 1286,735 1292,808 1304,812 1312,768 1320,787 1332,800 1338,790 1345,815 1357,815 1364,762 1371,770 1385,768 1392,800 1404,830 1411,850 1417,768 1424,820 1438,835 1445,860 1452,822 1462,832';

  function drawLine(id, data) {
    const pts = data.split(' ').map(p => p.split(',').map(Number)).map(([x, y]) => [x * 0.4107, y * 0.26624]);
    // Tangent at each sample: flat on peaks, average slope elsewhere
    const slope = pts.map((p, i) => {
      if (i === 0 || i === pts.length - 1) return 0;
      const a = (p[1] - pts[i - 1][1]) / (p[0] - pts[i - 1][0]);
      const b = (pts[i + 1][1] - p[1]) / (pts[i + 1][0] - p[0]);
      return a * b <= 0 ? 0 : 2 * a * b / (a + b);
    });
    let d = 'M' + pts[0].join(' ');
    for (let i = 1; i < pts.length; i++) {
      const [x0, y0] = pts[i - 1];
      const [x1, y1] = pts[i];
      const h = (x1 - x0) / 3;
      d += `C${x0 + h} ${y0 + slope[i - 1] * h} ${x1 - h} ${y1 - slope[i] * h} ${x1} ${y1}`;
    }
    document.getElementById(id).setAttribute('d', d);
  }

  drawLine('speedLine', speed);
  drawLine('heartLine', heart);
</script>
</body>
</html>
